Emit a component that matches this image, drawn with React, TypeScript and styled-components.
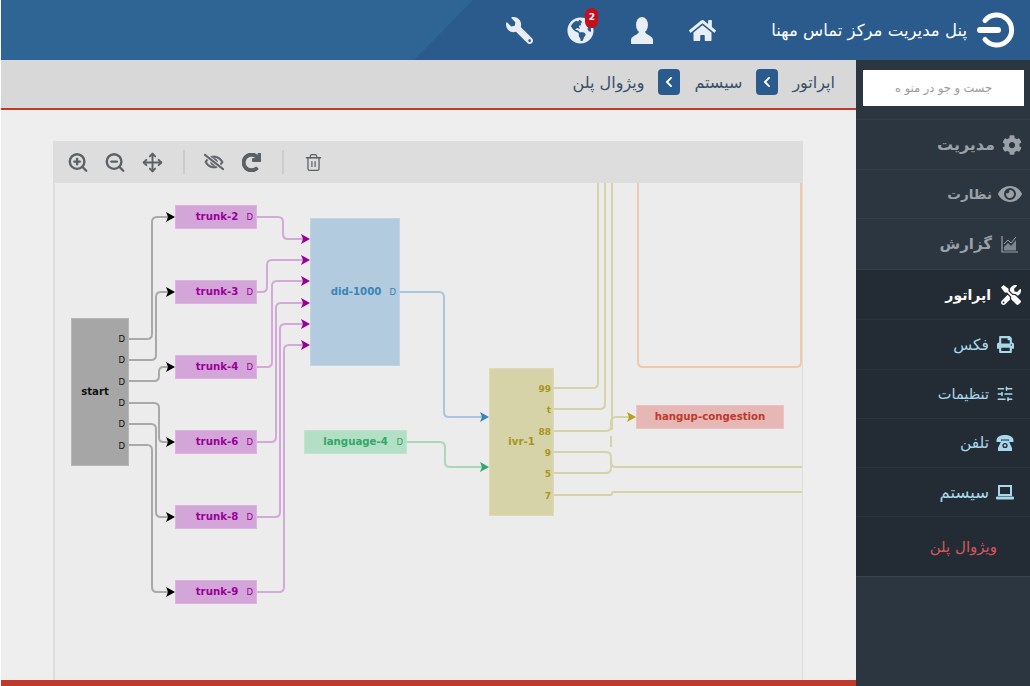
import React from 'react';
import styled, { createGlobalStyle } from 'styled-components';
import { ZoomIn, ZoomOut, Move, Trash2, SlidersHorizontal } from 'lucide-react';
import {
  FaWrench,
  FaGlobeAmericas,
  FaHome,
  FaCog,
  FaEye,
  FaTools,
  FaPrint,
  FaChevronLeft,
  FaRedo,
  FaRegEyeSlash,
} from 'react-icons/fa';

const GlobalStyle = createGlobalStyle`
  html, body {
    margin: 0;
    height: 100%;
    overflow: hidden;
    background: #fff;
  }
  * {
    box-sizing: border-box;
  }
  #root {
    height: 686px;
  }
`;

const Page = styled.div`
  display: flex;
  flex-direction: column;
  width: 1030px;
  height: 686px;
  padding-left: 1px;
  font-family: 'DejaVu Sans', sans-serif;
`;

const Header = styled.header`
  position: relative;
  display: flex;
  flex-direction: row-reverse;
  align-items: center;
  height: 60px;
  flex: none;
  background: #2a5b8c;
  color: #fff;
  overflow: hidden;
`;

const HeaderShade = styled.div`
  position: absolute;
  left: 0;
  top: 0;
  width: 472px;
  height: 60px;
  background: #2f6595;
  clip-path: polygon(0 0, 100% 0, 413px 100%, 0 100%);
`;

const Brand = styled.div`
  position: relative;
  display: flex;
  flex-direction: row-reverse;
  align-items: center;
  gap: 10px;
  padding-right: 13px;
  direction: rtl;
`;

const BrandTitle = styled.span`
  font-size: 16.5px;
`;

const HeaderIcons = styled.nav`
  position: relative;
  display: flex;
  flex-direction: row-reverse;
  align-items: center;
  gap: 32px;
  margin-right: 54px;
`;

const HeaderIcon = styled.span<{ $flip?: boolean }>`
  position: relative;
  display: flex;
  justify-content: center;
  width: 29px;
  color: #e8eef5;
  font-size: 27px;

  & > svg:first-child {
    transform: ${(p) => (p.$flip ? 'scaleX(-1)' : 'none')};
  }
`;

const Badge = styled.span`
  position: absolute;
  top: -9px;
  right: -3px;
  width: 13px;
  height: 20px;
  border-radius: 6px;
  background: #c4101c;
  color: #fff;
  font-size: 9px;
  font-weight: 700;
  line-height: 18px;
  text-align: center;
`;

const Body = styled.div`
  display: flex;
  flex: 1;
  min-height: 0;
`;

const Main = styled.main`
  display: flex;
  flex-direction: column;
  flex: 1;
  min-width: 0;
  background: #eee;
`;

const Breadcrumb = styled.div`
  display: flex;
  flex: none;
  align-items: center;
  gap: 14px;
  height: 50px;
  padding: 0 21px 4px 0;
  background: #d8d8d8;
  border-bottom: 2px solid #c0392b;
  color: #36506b;
  font-size: 16px;
  direction: rtl;
`;

const CrumbChevron = styled.span`
  display: flex;
  align-items: center;
  justify-content: center;
  width: 22px;
  height: 26px;
  border-radius: 4px;
  background: #2a5b8c;
  color: #fff;
  font-size: 12px;
`;

const Content = styled.div`
  display: flex;
  flex: 1;
  flex-direction: column;
  min-height: 0;
  padding: 31px 53px 0 52px;
`;

const Toolbar = styled.div`
  display: flex;
  flex: none;
  align-items: center;
  height: 42px;
  padding-left: 14px;
  background: #dddddd;
  color: #5c6166;
`;

const ToolButton = styled.span`
  display: flex;
  justify-content: center;
  width: 22px;
  margin-right: 15px;
  color: #5c6166;
`;

const ToolDivider = styled.span`
  width: 2px;
  height: 24px;
  margin: 0 18px 0 5px;
  background: #cccccc;
`;

const Canvas = styled.div`
  position: relative;
  flex: 1;
  overflow: hidden;
  background: #ececec;
  border-left: 2px solid #dddddd;
  border-right: 1px solid #dddddd;
`;

const Wires = styled.svg`
  position: absolute;
  left: 0;
  top: 0;
`;

const Node = styled.div<{ $bg: string; $fg: string }>`
  position: absolute;
  display: flex;
  align-items: center;
  padding-bottom: 1px;
  background: ${(p) => p.$bg};
  box-shadow: inset 0 0 0 1px rgba(255, 255, 255, 0.18);
  color: ${(p) => p.$fg};
  font-size: 10.2px;
  font-weight: 700;
`;

const NodeName = styled.span`
  flex: 1;
  text-align: center;
`;

const Port = styled.span<{ $strong?: boolean }>`
  position: absolute;
  right: ${(p) => (p.$strong ? 3 : 4)}px;
  font-size: ${(p) => (p.$strong ? 9 : 8.5)}px;
  font-weight: ${(p) => (p.$strong ? 700 : 400)};
  line-height: 10px;
`;

const Footer = styled.div`
  flex: none;
  height: 6px;
  background: #c0392b;
`;

const Sidebar = styled.aside`
  display: flex;
  flex: none;
  flex-direction: column;
  width: 174px;
  background: #2b3640;
  direction: rtl;
`;

const SearchWrap = styled.div`
  flex: none;
  height: 60px;
  padding: 10px 6px 0 7px;
  border-bottom: 1px solid #333e49;
`;

const Search = styled.div`
  height: 36px;
  padding-right: 32px;
  background: #fff;
  color: #999;
  font-size: 11.4px;
  line-height: 36px;
`;

const MenuItem = styled.div<{ $color: string; $dark?: boolean; $size?: number; $bold?: boolean; $height?: number }>`
  display: flex;
  flex: none;
  align-items: center;
  gap: 7px;
  height: ${(p) => p.$height ?? 50}px;
  padding-right: 8px;
  background: ${(p) => (p.$dark ? '#232c34' : 'transparent')};
  border-bottom: 1px solid ${(p) => (p.$dark ? '#2a343d' : '#333e49')};
  color: ${(p) => p.$color};
  font-size: ${(p) => p.$size ?? 15}px;
  font-weight: ${(p) => (p.$bold ? 700 : 400)};
`;

const MenuIcon = styled.span<{ $start?: number; $end?: number }>`
  display: flex;
  justify-content: center;
  width: 24px;
  margin-right: ${(p) => p.$start ?? 0}px;
  margin-left: ${(p) => p.$end ?? 0}px;
  font-size: 20px;
`;

const ActiveLeaf = styled.div`
  flex: none;
  height: 60px;
  padding-right: 33px;
  background: #232c34;
  border-bottom: 1px solid #38444f;
  color: #d8555d;
  font-size: 15px;
  line-height: 60px;
`;

// canvas origin in page coords, wires below are written in page coords
const OX = 55;
const OY = 183;

const wire = (pts: number[][], r = 5) => {
  let d = `M${pts[0][0]} ${pts[0][1]}`;
  for (let i = 1; i < pts.length - 1; i++) {
    const [x0, y0] = pts[i - 1];
    const [x, y] = pts[i];
    const [x2, y2] = pts[i + 1];
    const inX = Math.sign(x - x0);
    const inY = Math.sign(y - y0);
    const outX = Math.sign(x2 - x);
    const outY = Math.sign(y2 - y);
    const run = Math.min(r, (Math.abs(x - x0) + Math.abs(y - y0)) / 2, (Math.abs(x2 - x) + Math.abs(y2 - y)) / 2);
    d += ` L${x - inX * run} ${y - inY * run} Q${x} ${y} ${x + outX * run} ${y + outY * run}`;
  }
  const last = pts[pts.length - 1];
  return d + ` L${last[0]} ${last[1]}`;
};

const GRAY = '#a9a9a9';
const PINK = '#d2a9d8';
const OLIVE = '#d6d3a8';

const links: { pts: number[][]; color: string }[] = [
  { pts: [[129, 339], [152, 339], [152, 217], [168, 217]], color: GRAY },
  { pts: [[129, 360], [156, 360], [156, 292], [168, 292]], color: GRAY },
  { pts: [[129, 381], [159, 381], [159, 367], [168, 367]], color: GRAY },
  { pts: [[129, 403], [159, 403], [159, 442], [168, 442]], color: GRAY },
  { pts: [[129, 424], [156, 424], [156, 517], [168, 517]], color: GRAY },
  { pts: [[129, 445], [152, 445], [152, 592], [168, 592]], color: GRAY },
  { pts: [[257, 217], [283, 217], [283, 239], [304, 239]], color: PINK },
  { pts: [[257, 292], [267, 292], [267, 260], [304, 260]], color: PINK },
  { pts: [[257, 367], [272, 367], [272, 281], [304, 281]], color: PINK },
  { pts: [[257, 442], [276, 442], [276, 303], [304, 303]], color: PINK },
  { pts: [[257, 517], [280, 517], [280, 324], [304, 324]], color: PINK },
  { pts: [[257, 592], [284, 592], [284, 345], [304, 345]], color: PINK },
  { pts: [[400, 292], [444, 292], [444, 417], [482, 417]], color: '#abc6dc' },
  { pts: [[407, 442], [445, 442], [445, 467], [482, 467]], color: '#a8d8bc' },
  { pts: [[554, 388], [598, 388], [598, 170]], color: OLIVE },
  { pts: [[554, 409], [605, 409], [605, 170]], color: OLIVE },
  { pts: [[554, 431], [611, 431], [611, 417], [630, 417]], color: OLIVE },
  { pts: [[612, 170], [612, 430]], color: OLIVE },
  { pts: [[611, 436], [611, 447]], color: OLIVE },
  { pts: [[554, 452], [611, 452], [611, 467], [810, 467]], color: OLIVE },
  { pts: [[554, 473], [611, 473], [611, 462]], color: OLIVE },
  { pts: [[554, 495], [612, 495], [612, 492], [810, 492]], color: OLIVE },
  { pts: [[638, 170], [638, 367], [801, 367], [801, 170]], color: '#f0c9aa' },
];

const arrows: { x: number; y: number; color: string }[] = [
  ...[217, 292, 367, 442, 517, 592].map((y) => ({ x: 175, y, color: '#000' })),
  ...[239, 260, 281, 303, 324, 345].map((y) => ({ x: 310, y, color: '#990099' })),
  { x: 489, y: 417, color: '#3a84b8' },
  { x: 489, y: 467, color: '#2fa86a' },
  { x: 636, y: 417, color: '#b8a01c' },
];

const PURPLE = { bg: '#d3a5d8', fg: '#990099' };

type NodeSpec = {
  name: string;
  x: number;
  y: number;
  w: number;
  h: number;
  bg: string;
  fg: string;
  padRight?: number;
  padLeft?: number;
  strongPorts?: boolean;
  ports?: { label: string; y: number }[];
};

const trunk = (name: string, y: number): NodeSpec => ({
  name,
  x: 175,
  y,
  w: 82,
  h: 24,
  ...PURPLE,
  padLeft: 2,
  ports: [{ label: 'D', y: 12 }],
});

const nodes: NodeSpec[] = [
  {
    name: 'start',
    x: 71,
    y: 318,
    w: 58,
    h: 148,
    bg: '#a6a6a6',
    fg: '#111',
    padRight: 10,
    ports: [
      { label: 'D', y: 21 },
      { label: 'D', y: 42 },
      { label: 'D', y: 64 },
      { label: 'D', y: 85 },
      { label: 'D', y: 106 },
      { label: 'D', y: 128 },
    ],
  },
  trunk('trunk-2', 205),
  trunk('trunk-3', 280),
  trunk('trunk-4', 355),
  trunk('trunk-6', 430),
  trunk('trunk-8', 505),
  trunk('trunk-9', 580),
  {
    name: 'did-1000',
    x: 310,
    y: 218,
    w: 90,
    h: 148,
    bg: '#b2cbdf',
    fg: '#3a84b8',
    padLeft: 2,
    ports: [{ label: 'D', y: 74 }],
  },
  {
    name: 'language-4',
    x: 304,
    y: 430,
    w: 103,
    h: 24,
    bg: '#b3dfc5',
    fg: '#2fa86a',
    ports: [{ label: 'D', y: 12 }],
  },
  {
    name: 'ivr-1',
    x: 489,
    y: 368,
    w: 65,
    h: 148,
    bg: '#d6d3a8',
    fg: '#a8951c',
    strongPorts: true,
    ports: [
      { label: '99', y: 21 },
      { label: 't', y: 42 },
      { label: '88', y: 64 },
      { label: '9', y: 85 },
      { label: '5', y: 106 },
      { label: '7', y: 128 },
    ],
  },
  { name: 'hangup-congestion', x: 636, y: 405, w: 148, h: 24, bg: '#e6b7b5', fg: '#c0392b' },
];

const FlowNode = ({ spec }: { spec: NodeSpec }) => (
  <Node
    $bg={spec.bg}
    $fg={spec.fg}
    style={{
      left: spec.x - OX,
      top: spec.y - OY,
      width: spec.w,
      height: spec.h,
      paddingRight: spec.padRight,
      paddingLeft: spec.padLeft,
    }}
  >
    <NodeName>{spec.name}</NodeName>
    {spec.ports?.map((port, i) => (
      <Port key={i} $strong={spec.strongPorts} style={{ top: port.y - 5 }}>
        {port.label}
      </Port>
    ))}
  </Node>
);

const Logo = () => (
  <svg width="40" height="36" viewBox="0 0 40 36">
    <path d="M8 8.5 A15 15 0 1 1 8 27.5" fill="none" stroke="#fff" strokeWidth="5" strokeLinecap="round" />
    <path d="M3 18 H21" fill="none" stroke="#fff" strokeWidth="6" strokeLinecap="round" />
  </svg>
);

const UserBust = () => (
  <svg width="22" height="27" viewBox="0 0 22 27" fill="currentColor">
    <ellipse cx="11" cy="8" rx="6" ry="8" />
    <path d="M0 27 V23 C0 19 6 18.5 8 15 H14 C16 18.5 22 19 22 23 V27 Z" />
  </svg>
);

const ChartIcon = () => (
  <svg width="18" height="18" viewBox="0 0 18 18" fill="none" stroke="currentColor">
    <path d="M1 1 V17 H17" strokeWidth="1.2" />
    <path d="M3 15.5 V12 L7 8 L10 11 L15 5 V15.5 Z" fill="currentColor" stroke="none" opacity="0.75" />
    <path d="M3 9 L7 5 L10 8 L15 2" strokeWidth="1" />
  </svg>
);

const PhoneIcon = () => (
  <svg width="18" height="18" viewBox="0 0 18 18" fill="currentColor">
    <path d="M0.5 6.5 C0.5 2.5 5 1 9 1 C13 1 17.5 2.5 17.5 6.5 V8 H13 V5.5 H5 V8 H0.5 Z" />
    <path d="M5.5 6.5 H12.5 L16 14 V17 H2 V14 Z" />
    <circle cx="9" cy="11.5" r="2.6" fill="#232c34" />
    <circle cx="9" cy="11.5" r="1.2" />
  </svg>
);

const LaptopIcon = () => (
  <svg width="18" height="16" viewBox="0 0 18 16" fill="currentColor">
    <path d="M2 1 H16 V12 H2 Z M4 3 V10 H14 V3 Z" fillRule="evenodd" />
    <rect x="0" y="12.5" width="18" height="3" rx="1" />
  </svg>
);

const App = () => (
  <Page>
    <GlobalStyle />
    <Header>
      <HeaderShade />
      <Brand>
        <BrandTitle>پنل مدیریت مرکز تماس مهنا</BrandTitle>
        <Logo />
      </Brand>
      <HeaderIcons>
        <HeaderIcon>
          <FaHome />
        </HeaderIcon>
        <HeaderIcon>
          <UserBust />
        </HeaderIcon>
        <HeaderIcon>
          <FaGlobeAmericas />
          <Badge>2</Badge>
        </HeaderIcon>
        <HeaderIcon $flip>
          <FaWrench />
        </HeaderIcon>
      </HeaderIcons>
    </Header>
    <Body>
      <Main>
        <Breadcrumb>
          <span>اپراتور</span>
          <CrumbChevron>
            <FaChevronLeft />
          </CrumbChevron>
          <span>سیستم</span>
          <CrumbChevron>
            <FaChevronLeft />
          </CrumbChevron>
          <span>ویژوال پلن</span>
        </Breadcrumb>
        <Content>
          <Toolbar>
            <ToolButton>
              <ZoomIn size={23} strokeWidth={2.6} />
            </ToolButton>
            <ToolButton>
              <ZoomOut size={23} strokeWidth={2.6} />
            </ToolButton>
            <ToolButton>
              <Move size={21} strokeWidth={2.2} />
            </ToolButton>
            <ToolDivider />
            <ToolButton>
              <FaRegEyeSlash size={20} stroke="currentColor" strokeWidth={20} />
            </ToolButton>
            <ToolButton>
              <FaRedo size={19} stroke="currentColor" strokeWidth={36} />
            </ToolButton>
            <ToolDivider />
            <ToolButton>
              <Trash2 size={19} strokeWidth={1.6} />
            </ToolButton>
          </Toolbar>
          <Canvas>
            <Wires width="750" height="500" viewBox={`${OX} ${OY} 750 500`}>
              {links.map((link, i) => (
                <path key={i} d={wire(link.pts)} fill="none" stroke={link.color} strokeWidth="2" />
              ))}
            </Wires>
            {nodes.map((spec) => (
              <FlowNode key={spec.name} spec={spec} />
            ))}
            <Wires width="750" height="500" viewBox={`${OX} ${OY} 750 500`}>
              {arrows.map((a, i) => (
                <path
                  key={i}
                  d={`M${a.x} ${a.y} L${a.x - 9} ${a.y - 5} L${a.x - 7} ${a.y} L${a.x - 9} ${a.y + 5} Z`}
                  fill={a.color}
                />
              ))}
            </Wires>
          </Canvas>
        </Content>
        <Footer />
      </Main>
      <Sidebar>
        <SearchWrap>
          <Search>جست و جو در منو ه</Search>
        </SearchWrap>
        <MenuItem $color="#9aa1a8" $size={16} $bold>
          <MenuIcon $start={-2} $end={-2}>
            <FaCog />
          </MenuIcon>
          مدیریت
        </MenuItem>
        <MenuItem $color="#9aa1a8" $size={13.5} $bold $height={49}>
          <MenuIcon $end={-1}>
            <FaEye size={24} />
          </MenuIcon>
          نظارت
        </MenuItem>
        <MenuItem $color="#9aa1a8" $size={15} $bold $height={51}>
          <MenuIcon $end={-1}>
            <ChartIcon />
          </MenuIcon>
          گزارش
        </MenuItem>
        <MenuItem $color="#ffffff" $dark $size={14} $bold>
          <MenuIcon $start={-1} $end={1}>
            <FaTools />
          </MenuIcon>
          اپراتور
        </MenuItem>
        <MenuItem $color="#a8d8ea" $dark $size={15.5}>
          <MenuIcon $start={5} $end={-3}>
            <FaPrint size={17} />
          </MenuIcon>
          فکس
        </MenuItem>
        <MenuItem $color="#a8d8ea" $dark $size={14.5} $height={49}>
          <MenuIcon $start={5} $end={-3}>
            <SlidersHorizontal size={18} />
          </MenuIcon>
          تنظیمات
        </MenuItem>
        <MenuItem $color="#a8d8ea" $dark $size={15.5} $height={49}>
          <MenuIcon $start={5} $end={-3}>
            <PhoneIcon />
          </MenuIcon>
          تلفن
        </MenuItem>
        <MenuItem $color="#a8d8ea" $dark $size={16.5} $height={49}>
          <MenuIcon $start={5} $end={-3}>
            <LaptopIcon />
          </MenuIcon>
          سیستم
        </MenuItem>
        <ActiveLeaf>ویژوال پلن</ActiveLeaf>
      </Sidebar>
    </Body>
  </Page>
);

export default App;
